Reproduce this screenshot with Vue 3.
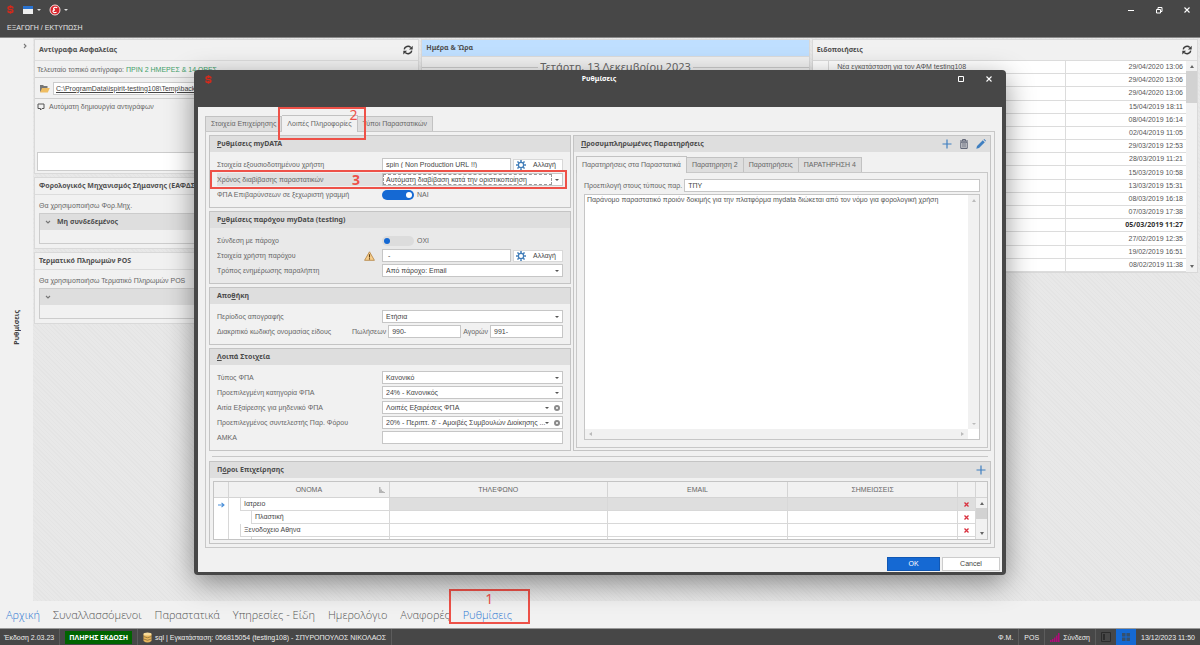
<script setup>
import { ref } from 'vue'

const notices = [
  '29/04/2020 13:06', '29/04/2020 13:06', '29/04/2020 13:06', '15/04/2019 18:11',
  '08/04/2019 16:14', '02/04/2019 11:05', '29/03/2019 12:53', '28/03/2019 11:21',
  '15/03/2019 10:58', '13/03/2019 15:31', '08/03/2019 16:18', '07/03/2019 17:38',
  '05/03/2019 11:27', '27/02/2019 12:35', '19/02/2019 16:51', '08/02/2019 11:38'
]
const unread = 12
const nav = ['Αρχική', 'Συναλλασσόμενοι', 'Παραστατικά', 'Υπηρεσίες - Είδη', 'Ημερολόγιο', 'Αναφορές', 'Ρυθμίσεις']
const tabs = ['Στοιχεία Επιχείρησης', 'Λοιπές Πληροφορίες', 'Τύποι Παραστατικών']
const noteTabs = ['Παρατηρήσεις στα Παραστατικά', 'Παρατηρηση 2', 'Παρατηρήσεις', 'ΠΑΡΑΤΗΡΗΣΗ 4']
const resources = [
  { name: 'Ιατρειο', level: 1 },
  { name: 'Πλαστική', level: 2 },
  { name: 'Ξενοδοχειο Αθηνα', level: 1 }
]
const vatSeparate = ref(true)
const provider = ref(false)
const note = ref('Παράνομο παραστατικό προιόν δοκιμής για την πλατφόρμα mydata διώκεται από τον νόμο για φορολογική χρήση')
</script>

<template>
  <div class="app">
    <svg class="defs" aria-hidden="true">
      <symbol id="logo" viewBox="0 0 10 12">
        <path d="M8.400 4.400V3.600Q8.400 2 6.800 2H3.200Q1.600 2 1.600 3.600V4.200Q1.600 5.200 3 5.600L7 6.400Q8.400 6.800 8.400 7.800V8.400Q8.400 10 6.800 10H3.200Q1.600 10 1.600 8.400V7.600M5 0V4M5 8V12" fill="none" stroke="#d42a1c" stroke-width="2.200" />
      </symbol>
      <symbol id="refresh" viewBox="0 0 16 16">
        <path d="M2 7A6 5.6 0 0 1 12.4 4M14 9A6 5.6 0 0 1 3.6 12" fill="none" stroke="#3c3c3c" stroke-width="2.4" />
        <path d="M15.5 1V7H9.5ZM.5 15V9H6.5Z" fill="#3c3c3c" />
      </symbol>
      <symbol id="gear" viewBox="0 0 16 16">
        <g stroke="#3f7cb8" fill="none">
          <circle cx="8" cy="8" r="4.2" stroke-width="2" />
          <path d="M8 0V3M8 13V16M0 8H3M13 8H16M2.3 2.3L4.5 4.5M11.5 11.5L13.7 13.7M13.7 2.3L11.5 4.5M4.5 11.5L2.3 13.7" stroke-width="2.4" />
        </g>
      </symbol>
      <symbol id="plus" viewBox="0 0 10 10"><path d="M5 .5V9.5M.5 5H9.5" stroke="#3f7fc0" stroke-width="1.2" /></symbol>
      <symbol id="close" viewBox="0 0 8 8"><path d="M1.5 1.5L6.5 6.5M6.5 1.5L1.5 6.5" stroke="#fff" stroke-width="1.1" /></symbol>
      <symbol id="chev" viewBox="0 0 8 8"><path d="M2 3L4 5L6 3" fill="none" stroke="#777" stroke-width="1.1" /></symbol>
    </svg>

    <header class="top">
      <div class="bar">
        <svg class="logo"><use href="#logo" /></svg>
        <button class="quick" aria-label="Παράθυρο">
          <svg width="12" height="10" viewBox="0 0 12 10"><path d="M1 1H11V9H1Z" fill="#eee" /><path d="M1 1H11V4H1Z" fill="#2a73d0" /></svg>
          <i class="tri light"></i>
        </button>
        <button class="quick" aria-label="Ενέργειες">
          <svg width="12" height="12" viewBox="0 0 12 12"><circle cx="6" cy="6" r="5" fill="#d8232a" stroke="#f4dcdc" /><path d="M8.2 3.6Q5.2 2.6 4.6 4.6Q4.4 5.8 6 5.9Q3.8 6.2 4 7.6Q4.6 9.2 7.6 8.2" fill="none" stroke="#fff" stroke-width="1.2" /></svg>
          <i class="tri light"></i>
        </button>
        <span class="grow"></span>
        <div class="winbtns">
          <button aria-label="Ελαχιστοποίηση"><svg viewBox="0 0 8 8"><path d="M1 4.5H7" stroke="#fff" /></svg></button>
          <button aria-label="Επαναφορά"><svg viewBox="0 0 8 8"><path d="M1.5 3.5H5.5V7H1.5ZM3 3V1.5H7V5.5H6" fill="none" stroke="#fff" /></svg></button>
          <button aria-label="Κλείσιμο"><svg><use href="#close" /></svg></button>
        </div>
      </div>
      <a href="#" class="export">ΕΞΑΓΩΓΗ / ΕΚΤΥΠΩΣΗ</a>
    </header>

    <main class="desk">
      <aside class="strip">
        <svg class="exp" viewBox="0 0 8 8"><path d="M3 2L5 4L3 6" fill="none" stroke="#777" stroke-width="1.1" /></svg>
        <span class="vert">Ρυθμίσεις</span>
      </aside>
      <div class="cols">
        <div class="col">
          <section class="panel backup">
            <h2 class="tall">Αντίγραφα Ασφαλείας <button class="ref" aria-label="Ανανέωση"><svg><use href="#refresh" /></svg></button></h2>
            <p class="last">Τελευταίο τοπικό αντίγραφο: <span class="green">ΠΡΙΝ 2 ΗΜΕΡΕΣ &amp; 14 ΩΡΕΣ</span></p>
            <div class="path">
              <svg width="11" height="9" viewBox="0 0 11 9"><path d="M1 8V1H4L5 2H8.500V4" fill="#777" /><path d="M1 8.500L3 4H10.800L8.800 8.500Z" fill="#efbd62" /></svg>
              <a href="#">C:\ProgramData\ispirit-testing108\Temp\backup</a>
            </div>
            <p class="auto"><svg width="8" height="8" viewBox="0 0 8 8"><path d="M1 1H7V5.500H5L3.500 7V5.500H1Z" fill="none" stroke="#555" /></svg>Αυτόματη δημιουργία αντιγράφων</p>
            <button class="create">Δημιουργία</button>
          </section>
          <section class="panel">
            <h2>Φορολογικός Μηχανισμός Σήμανσης (ΕΑΦΔΣΣ)</h2>
            <p class="use">Θα χρησιμοποιήσω Φορ.Μηχ.</p>
            <div class="sub"><h3><svg><use href="#chev" /></svg>Μη συνδεδεμένος</h3></div>
          </section>
          <section class="panel">
            <h2>Τερματικό Πληρωμών POS</h2>
            <p class="use">Θα χρησιμοποιήσω Τερματικό Πληρωμών POS</p>
            <div class="sub"><h3><svg><use href="#chev" /></svg></h3></div>
          </section>
        </div>
        <div class="col">
          <section class="panel">
            <h2 class="blue">Ημέρα &amp; Ώρα</h2>
            <p class="date"><span>Τετάρτη, 13 Δεκεμβρίου 2023</span></p>
          </section>
        </div>
        <div class="col">
          <section class="panel news">
            <h2 class="tall">Ειδοποιήσεις <button class="ref" aria-label="Ανανέωση"><svg><use href="#refresh" /></svg></button></h2>
            <div class="newsbody">
              <table>
                <tbody>
                  <tr v-for="(n, i) in notices" :key="i" :class="{ bold: i === unread }">
                    <td class="mark"></td>
                    <td class="msg">{{ i === 0 ? 'Νέα εγκατάσταση για τον ΑΦΜ testing108' : '' }}</td>
                    <td class="when">{{ n }}</td>
                  </tr>
                </tbody>
              </table>
              <div class="scroll"><i class="tri up"></i><b></b><i class="tri end"></i></div>
            </div>
          </section>
        </div>
      </div>
    </main>

    <nav class="nav">
      <a v-for="(n, i) in nav" :key="n" href="#" :class="{ on: i === 0 || i === 6 }">{{ n }}<span v-if="i === 6" class="mark1">1</span></a>
    </nav>

    <footer class="status">
      <span class="cell first">Έκδοση 2.03.23</span>
      <span class="cell"><b class="full">ΠΛΗΡΗΣ ΕΚΔΟΣΗ</b></span>
      <span class="cell db">
        <svg width="9" height="11" viewBox="0 0 9 11"><path d="M.5 2V9Q4.500 12 8.500 9V2Z" fill="#e8b65c" /><ellipse cx="4.500" cy="2" rx="4" ry="1.500" fill="#f8dc9c" /><path d="M.5 4.500Q4.500 7 8.500 4.500M.5 7Q4.500 9.500 8.500 7" fill="none" stroke="#7d6434" stroke-width=".7" /></svg>
        sql | Εγκατάσταση: 056815054 (testing108) - ΣΠΥΡΟΠΟΥΛΟΣ ΝΙΚΟΛΑΟΣ
      </span>
      <span class="grow"></span>
      <span class="cell">Φ.Μ.</span>
      <span class="cell">POS</span>
      <span class="cell conn">
        <svg width="10" height="9" viewBox="0 0 10 9"><path d="M0 9V7H1.500V9ZM2 9V6H3.500V9ZM4 9V4.500H5.500V9ZM6 9V2.500H7.500V9ZM8 9V0H9.500V9Z" fill="#b3087a" /></svg>
        Σύνδεση
      </span>
      <button class="view" aria-label="Πλευρική προβολή"><svg width="10" height="10" viewBox="0 0 10 10"><path d="M.5 .5H9.500V9.500H.5Z" fill="none" stroke="#2c2c2c" /><path d="M2 2H4V8H2Z" fill="#2c2c2c" /></svg></button>
      <button class="view active" aria-label="Προβολή πλακιδίων"><svg width="10" height="10" viewBox="0 0 10 10"><path d="M1 1H4.500V4.500H1ZM5.500 1H9V4.500H5.500ZM1 5.500H4.500V9H1ZM5.500 5.500H9V9H5.500Z" fill="#35506e" /></svg></button>
      <span class="cell time">13/12/2023 11:50</span>
    </footer>

    <div class="dialog" role="dialog" aria-label="Ρυθμίσεις">
      <div class="dtitle">
        <svg class="logo"><use href="#logo" /></svg>
        <strong>Ρυθμίσεις</strong>
        <div class="winbtns">
          <button aria-label="Μεγιστοποίηση"><svg viewBox="0 0 8 8"><path d="M1.500 1.500H6.500V6.500H1.500Z" fill="none" stroke="#fff" /></svg></button>
          <button aria-label="Κλείσιμο"><svg><use href="#close" /></svg></button>
        </div>
      </div>
      <div class="dbody">
        <div class="tabs">
          <button v-for="(t, i) in tabs" :key="t" :class="{ on: i === 1 }">{{ t }}<span v-if="i === 1" class="mark2">2</span></button>
        </div>
        <div class="page">
          <div class="split">
            <div class="stack">
              <section class="group">
                <h4><u>Ρ</u>υθμίσεις myDATA</h4>
                <div class="rows">
                  <div class="row">
                    <label for="user">Στοιχεία εξουσιοδοτημένου χρήστη</label>
                    <div class="ctl"><input id="user" type="text" value="spin ( Non Production URL !!)"><button class="change"><svg><use href="#gear" /></svg>Αλλαγή</button></div>
                  </div>
                  <div class="row hot">
                    <label for="sendtime">Χρόνος διαβίβασης παραστατικών</label>
                    <div class="ctl sel focus"><select id="sendtime"><option>Αυτόματη διαβίβαση κατά την οριστικοποίηση</option></select><i class="tri"></i></div>
                    <span class="mark3">3</span>
                  </div>
                  <div class="row">
                    <label for="vatsep">ΦΠΑ Επιβαρύνσεων σε ξεχωριστή γραμμή</label>
                    <div class="ctl"><input id="vatsep" v-model="vatSeparate" type="checkbox" class="toggle"><span class="state">{{ vatSeparate ? 'ΝΑΙ' : 'ΟΧΙ' }}</span></div>
                  </div>
                </div>
              </section>
              <section class="group dim">
                <h4>Ρ<u>υ</u>θμίσεις παρόχου myData (testing)</h4>
                <div class="rows">
                  <div class="row">
                    <label for="prov">Σύνδεση με πάροχο</label>
                    <div class="ctl"><input id="prov" v-model="provider" type="checkbox" class="toggle"><span class="state">{{ provider ? 'ΝΑΙ' : 'ΟΧΙ' }}</span></div>
                  </div>
                  <div class="row">
                    <label for="provuser" class="warned">Στοιχεία χρήστη παρόχου
                      <svg width="11" height="10" viewBox="0 0 11 10"><path d="M5.500 .8L10.400 9.300H.6Z" fill="#f8cf8c" stroke="#b98a4c" stroke-width=".9" stroke-linejoin="round" /><path d="M5.500 3.200V6.500M5.500 7.200V8.400" stroke="#5b3c14" stroke-width="1.100" /></svg>
                    </label>
                    <div class="ctl"><input id="provuser" type="text" value=" -"><button class="change"><svg><use href="#gear" /></svg>Αλλαγή</button></div>
                  </div>
                  <div class="row">
                    <label for="notify">Τρόπος ενημέρωσης παραλήπτη</label>
                    <div class="ctl sel"><select id="notify"><option>Από πάροχο: Email</option></select><i class="tri"></i></div>
                  </div>
                </div>
              </section>
              <section class="group">
                <h4>Απο<u>θ</u>ήκη</h4>
                <div class="rows">
                  <div class="row">
                    <label for="period">Περίοδος απογραφής</label>
                    <div class="ctl sel"><select id="period"><option>Ετήσια</option></select><i class="tri"></i></div>
                  </div>
                  <div class="row codes">
                    <span class="cap">Διακριτικό κωδικής ονομασίας είδους</span>
                    <label for="sales">Πωλήσεων</label><input id="sales" type="text" value="990-">
                    <label for="buys">Αγορών</label><input id="buys" type="text" value="991-">
                  </div>
                </div>
              </section>
              <section class="group">
                <h4><u>Λ</u>οιπά Στοιχεία</h4>
                <div class="rows">
                  <div class="row">
                    <label for="vattype">Τύπος ΦΠΑ</label>
                    <div class="ctl sel"><select id="vattype"><option>Κανονικό</option></select><i class="tri"></i></div>
                  </div>
                  <div class="row">
                    <label for="vatcat">Προεπιλεγμένη κατηγορία ΦΠΑ</label>
                    <div class="ctl sel"><select id="vatcat"><option>24% - Κανονικός</option></select><i class="tri"></i></div>
                  </div>
                  <div class="row">
                    <label for="exempt">Αιτία Εξαίρεσης για μηδενικό ΦΠΑ</label>
                    <div class="ctl sel clr"><select id="exempt"><option>Λοιπές Εξαιρέσεις ΦΠΑ</option></select><i class="tri"></i><button class="x" aria-label="Καθαρισμός"></button></div>
                  </div>
                  <div class="row">
                    <label for="factor">Προεπιλεγμένος συντελεστής Παρ. Φόρου</label>
                    <div class="ctl sel clr"><select id="factor"><option>20% - Περιπτ. δ' - Αμοιβές Συμβουλών Διοίκησης ...</option></select><i class="tri"></i><button class="x" aria-label="Καθαρισμός"></button></div>
                  </div>
                  <div class="row">
                    <label for="amka">ΑΜΚΑ</label>
                    <div class="ctl"><input id="amka" type="text"></div>
                  </div>
                </div>
              </section>
            </div>

            <section class="group notes">
              <h4><u>Π</u>ροσυμπληρωμένες Παρατηρήσεις
                <span class="tools">
                  <button aria-label="Προσθήκη"><svg><use href="#plus" /></svg></button>
                  <button aria-label="Διαγραφή"><svg viewBox="0 0 10 10"><path d="M1 2H9M3.500 1.800V.6H6.500V1.800M1.800 3.200H8.200V9.400H1.800ZM4 4V8.500M6 4V8.500" fill="none" stroke="#555b6e" /></svg></button>
                  <button aria-label="Επεξεργασία"><svg viewBox="0 0 10 10"><path d="M.3 9.700L1 7L6.800 1.200L8.800 3.200L3 9ZM7.500 .6L8.300 0L10 1.700L9.400 2.500Z" fill="#3f7fc0" /></svg></button>
                </span>
              </h4>
              <div class="notebody">
                <div class="tabs small">
                  <button v-for="(t, i) in noteTabs" :key="t" :class="{ on: i === 0 }">{{ t }}</button>
                </div>
                <div class="notepage">
                  <div class="types"><label for="types">Προεπιλογή στους τύπους παρ.</label><input id="types" type="text" value="ΤΠΥ"></div>
                  <div class="memo">
                    <textarea v-model="note" aria-label="Κείμενο παρατήρησης"></textarea>
                    <div class="vbar"><i class="tri up"></i><i class="tri"></i></div>
                    <div class="hbar"><i class="tri lt"></i><i class="tri rt"></i></div>
                  </div>
                </div>
              </div>
            </section>
          </div>

          <hr>

          <section class="group res">
            <h4>Π<u>ό</u>ροι Επιχείρησης
              <span class="tools"><button aria-label="Προσθήκη πόρου"><svg><use href="#plus" /></svg></button></span>
            </h4>
            <div class="gridbox">
              <table>
                <thead>
                  <tr>
                    <th class="c0"></th>
                    <th class="c1">ΟΝΟΜΑ<svg class="sort" viewBox="0 0 6 6"><path d="M0 0V6H6V5H4.500V4H3V2.500H1.500V0Z" fill="#b5b5b5" /></svg></th>
                    <th class="c2">ΤΗΛΕΦΩΝΟ</th>
                    <th class="c3">EMAIL</th>
                    <th>ΣΗΜΕΙΩΣΕΙΣ</th>
                    <th class="c5"></th>
                  </tr>
                </thead>
                <tbody>
                  <tr v-for="(r, i) in resources" :key="r.name" :class="{ cur: i === 0 }">
                    <td class="ind"><svg v-if="i === 0" width="7" height="6" viewBox="0 0 7 6"><path d="M0 3H6M3.500 .8L6 3L3.500 5.200" fill="none" stroke="#4a90d9" stroke-width="1.100" /></svg></td>
                    <td class="name"><div :class="'lv' + r.level">{{ r.name }}</div></td>
                    <td></td><td></td><td></td>
                    <td class="del"><button :aria-label="'Διαγραφή ' + r.name"><svg width="5" height="5" viewBox="0 0 5 5"><path d="M.5 .5L4.500 4.500M4.500 .5L.5 4.500" stroke="#d9303e" stroke-width="1.300" /></svg></button></td>
                  </tr>
                  <tr class="part"><td class="ind"></td><td class="name"><div class="lv2"></div></td><td></td><td></td><td></td><td></td></tr>
                </tbody>
              </table>
              <div class="gscroll"><span></span><div class="scroll short"><i class="tri up"></i><b></b><i class="tri end"></i></div></div>
            </div>
          </section>
        </div>
        <div class="actions">
          <button class="ok">OK</button>
          <button class="cancel">Cancel</button>
        </div>
      </div>
    </div>
  </div>
</template>

<style>
body { margin: 0; background: #f1f1f1; }
</style>

<style scoped>
* { box-sizing: border-box; }
.app {
  position: relative; display: flex; flex-direction: column; min-height: 100vh; overflow: hidden;
  font: 7px/12px "Liberation Sans", Arial, sans-serif; color: #666; background: #f1f1f1;
}
.defs { position: absolute; width: 0; height: 0; }
button, input, select, textarea { font: inherit; color: inherit; margin: 0; padding: 0; border: 0; border-radius: 0; background: none; }
h2, h3, h4, p { margin: 0; font-size: 7px; }
h2, h3, h4, b, strong, .bold, .vert { font-family: "Noto Sans", sans-serif; }
svg { flex: none; display: block; }
a { color: inherit; text-decoration: none; }
.grow { flex: 1; }
.tri { width: 0; height: 0; border: 2px solid transparent; border-top-color: #555; border-bottom-width: 0; flex: none; }
.tri.light { border-top-color: #ddd; }
.tri.up { border-width: 0 2px 3px; border-bottom-color: #666; }
.tri.end { border-width: 3px 2px 0; border-top-color: #666; }
.logo { width: 7px; height: 9px; }

.top { height: 38px; background: #474747; border-bottom: 1px solid #8a8a8a; color: #e6e6e6; }
.bar { display: flex; align-items: center; height: 19px; padding: 0 9px 0 7px; }
.quick { display: flex; align-items: center; gap: 3px; margin-left: 8px; }
.export { display: block; padding: 3px 7px; }
.winbtns { display: flex; gap: 20px; }
.winbtns button { width: 8px; height: 8px; }
.winbtns svg { width: 8px; height: 8px; }

.desk { flex: 1; display: flex; min-height: 562px; }
.strip { width: 33px; display: flex; flex-direction: column; align-items: center; position: relative; }
.exp { width: 8px; height: 8px; margin: 4px 0 0 16px; }
.vert { writing-mode: vertical-rl; transform: rotate(180deg); font-weight: 700; color: #444; margin-top: 260px; }
.cols {
  flex: 1; display: grid; grid-template-columns: 387fr 390fr 388fr; gap: 2px; padding: 1px 2px 0 1px;
  background: repeating-linear-gradient(45deg, #e4e4e4 0 1px, #e8e8e8 1px 3px);
}
.col { display: flex; flex-direction: column; gap: 3px; min-width: 0; }
.panel { background: #f1f1f1; border: 1px solid #d9d9d9; color: #666; }
.panel h2 { height: 17px; line-height: 16px; padding: 0 5px 0 4px; color: #505050; border-bottom: 1px solid #dcdcdc; display: flex; justify-content: space-between; align-items: center; white-space: nowrap; }
.panel h2.tall { height: 21px; }
.panel h2.blue { background: #bfdfff; }
.ref svg { width: 10px; height: 10px; }
.last { height: 17px; line-height: 18px; padding-left: 2px; border-bottom: 1px solid #cfcfcf; }
.green { color: #3f9e68; }
.path { display: flex; align-items: center; gap: 3px; height: 21px; padding: 0 4px; border-bottom: 1px solid #cfcfcf; }
.path a { flex: 1; background: #fff; border: 1px solid #ccc; height: 13px; line-height: 11px; padding-left: 2px; text-decoration: underline; color: #444; }
.auto { display: flex; align-items: center; gap: 4px; padding: 2px; height: 16px; }
.create { display: block; width: calc(100% - 4px); height: 19px; margin: 37px 2px 2px; background: #fff; border: 1px solid #ccc; }
.use { height: 18px; line-height: 22px; padding-left: 4px; }
.sub { margin: 0 4px 4px; border: 1px solid #ccc; height: 31px; }
.sub h3 { display: flex; align-items: center; gap: 5px; height: 16px; padding-left: 4px; background: #dedede; color: #505050; }
.sub svg { width: 8px; height: 8px; }
.date { font: 11px/20px "Noto Sans", sans-serif; height: 300px; display: flex; align-items: flex-start; gap: 2px; }
.date::before, .date::after { content: ""; flex: 1; border-top: 1px solid #ccc; margin-top: 10px; }

.newsbody { display: flex; background: #fff; }
.newsbody table { flex: 1; height: 211px; border-collapse: collapse; color: #555; }
.newsbody td { padding: 0 3px; line-height: 12px; border-bottom: 1px solid #dcdcdc; border-right: 1px solid #dcdcdc; }
.newsbody .mark { width: 16px; }
.newsbody .msg { padding-left: 8px; }
.newsbody .when { width: 121px; text-align: right; border-right: 0; }
.newsbody .bold { font-weight: 700; color: #333; }
.scroll { width: 11px; background: #f1f1f1; display: flex; flex-direction: column; align-items: center; padding: 4px 0; }
.scroll b { width: 11px; height: 32px; background: #d2d2d2; margin-top: 3px; }
.scroll .end { margin-top: auto; }

.nav { display: flex; align-items: center; gap: 13px; height: 27px; padding-left: 6px; font: 300 11px/18px "Open Sans", "Noto Sans", sans-serif; color: #555; }
.nav .on { color: #2f78d2; }
.nav a { position: relative; white-space: nowrap; }
.mark1 { position: absolute; inset: -17px -18px 0 -14px; border: 2px solid #ee5148; color: #ee5148; text-align: center; font: 14px/16px "Noto Sans", sans-serif; }

.status { display: flex; align-items: stretch; height: 17px; background: #474747; border-top: 1px solid #999; color: #eee; line-height: 15px; }
.cell { display: flex; align-items: center; gap: 3px; padding: 0 5px; border-right: 1px solid #5c5c5c; white-space: nowrap; }
.cell.first { padding-left: 4px; }
.full { background: #006400; color: #fff; padding: 0 4px; line-height: 13px; }
.view { width: 20px; display: flex; align-items: center; justify-content: center; }
.view.active { background: #1569d3; }
.time { border-right: 0; }

.dialog { position: absolute; top: 70px; left: 194px; right: 194px; background: #474747; padding: 0 4px 3px; border-radius: 4px; box-shadow: 0 8px 28px rgba(0, 0, 0, .42); }
.dtitle { display: grid; grid-template-columns: 1fr auto 1fr; align-items: center; height: 37px; padding: 0 9px 19px 7px; color: #fff; }
.dtitle .winbtns { justify-content: flex-end; }
.dbody { background: #f1f1f1; padding: 8px 2px 1px 7px; }
.tabs { display: flex; align-items: flex-end; height: 16px; }
.tabs button { position: relative; height: 15px; padding: 0 5px; background: #dedede; border: 1px solid #c2c2c2; border-width: 1px 1px 0 0; white-space: nowrap; }
.tabs button:first-child { border-left-width: 1px; }
.tabs button.on { height: 17px; margin-bottom: -1px; background: #f1f1f1; z-index: 1; }
.mark2 { position: absolute; inset: -9px -9px -8px -4px; border: 2px solid #ee5148; color: #ee5148; font: 14px/12px "Noto Sans", sans-serif; text-align: right; padding-right: 6px; z-index: 2; }
.page { border: 1px solid #c8c8c8; margin-right: 5px; padding: 3px; }
.split { display: grid; grid-template-columns: 362fr 418fr; gap: 2px; }
.stack { display: flex; flex-direction: column; gap: 3px; min-width: 0; }
.group { border: 1px solid #c4c4c4; min-width: 0; }
.group h4 { display: flex; align-items: center; height: 16px; padding: 0 4px 0 7px; background: #dedede; color: #4c4c4c; white-space: pre; }
.group.dim { background: #e9e9e9; }
.rows { display: flex; flex-direction: column; gap: 2px; padding: 6px 7px; }
.row { position: relative; display: grid; grid-template-columns: 165fr 181fr; align-items: center; height: 13px; white-space: nowrap; }
.row.hot { background: #e0e0e0; }
.warned { display: flex; justify-content: space-between; align-items: center; padding-right: 7px; }
.ctl { position: relative; display: flex; align-items: center; min-width: 0; height: 13px; }
input[type="text"] { flex: 1; min-width: 0; width: 100%; height: 13px; background: #fff; border: 1px solid #c6c6c6; padding: 0 3px; color: #444; }
.change { display: flex; align-items: center; gap: 7px; width: 50px; height: 12px; margin-left: 2px; padding-left: 2px; background: #fff; border: 1px solid #d8d8d8; color: #444; }
.change svg { width: 10px; height: 10px; }
.sel select { appearance: none; width: 100%; height: 13px; background: #fff; border: 1px solid #c6c6c6; padding: 0 12px 0 3px; color: #444; }
.sel .tri { position: absolute; right: 4px; top: 6px; }
.clr .tri { right: 14px; }
.focus::before { content: ""; position: absolute; inset: 1px 11px 1px 1px; border: 1px dashed #999; pointer-events: none; }
.x { position: absolute; right: 3px; top: 4px; width: 6px; height: 6px; border: 2px solid #8a8a8a; border-radius: 50%; }
.mark3 { position: absolute; inset: -3px -4px -3px -7px; border: 2px solid #ee5148; color: #ee5148; font: 700 14px/15px "Noto Sans", sans-serif; padding-left: 140px; pointer-events: none; }
.toggle { appearance: none; width: 32px; height: 10px; border-radius: 5px; background: #dcdcdc; display: flex; align-items: center; padding: 0 2px; }
.toggle::before { content: ""; width: 6px; height: 6px; border-radius: 50%; background: #1569d3; }
.toggle:checked { background: #1569d3; justify-content: flex-end; }
.toggle:checked::before { background: #fff; }
.state { margin-left: 3px; }
.row.codes { display: flex; gap: 2px; }
.codes .cap { width: 133px; }
.codes label { flex: none; }

.notes { display: flex; flex-direction: column; }
.tools { margin-left: auto; display: flex; gap: 7px; }
.tools svg { width: 10px; height: 10px; }
.notebody { flex: 1; display: flex; flex-direction: column; padding: 4px 2px 2px; }
.notepage { flex: 1; display: flex; flex-direction: column; gap: 2px; border: 1px solid #c8c8c8; padding: 6px 7px 7px; }
.types { display: flex; align-items: center; gap: 2px; white-space: nowrap; }
.memo { flex: 1; display: grid; grid-template: 1fr 10px / 1fr 11px; background: #fff; border: 1px solid #c6c6c6; }
.memo textarea { resize: none; padding: 0 2px; line-height: 10px; color: #555; overflow: hidden; outline: 0; }
.vbar, .hbar { background: #f1f1f1; display: flex; align-items: center; justify-content: space-between; padding: 4px; }
.vbar { flex-direction: column; }
.memo .tri { border-top-color: #bbb; }
.memo .tri.up { border-top-color: transparent; border-bottom-color: #bbb; }
.memo .lt { border-width: 2px 3px 2px 0; border-color: transparent #bbb; }
.memo .rt { border-width: 2px 0 2px 3px; border-color: transparent #bbb; }

hr { border: 0; border-top: 1px solid #c8c8c8; margin: 5px 3px 4px; }
.gridbox { display: flex; height: 59px; margin: 3px 2px 3px 3px; border: 1px solid #c4c4c4; overflow: hidden; background: #fff; }
.gridbox table { flex: 1; border-collapse: separate; border-spacing: 0; table-layout: fixed; height: 61px; color: #444; }
.gridbox th { height: 16px; padding: 0; background: #f1f1f1; font-weight: 400; color: #666; border-right: 1px solid #d4d4d4; border-bottom: 1px solid #d4d4d4; position: relative; }
.gridbox td { height: 13px; padding: 0; border-right: 1px solid #d8d8d8; border-bottom: 1px solid #d8d8d8; line-height: 12px; }
.c0 { width: 15px; }
.c1 { width: 21.1%; }
.c2 { width: 28.6%; }
.c3 { width: 23.7%; }
.c5 { width: 18px; }
.sort { position: absolute; right: 4px; top: 5px; width: 6px; height: 6px; }
.gridbox .ind, .gridbox .name { border-bottom: 0; }
.ind svg, .del svg { margin: 0 auto; }
.name div { height: 13px; border-left: 1px solid #d8d8d8; border-bottom: 1px solid #d8d8d8; padding-left: 3px; }
.name .lv1 { margin-left: 11px; }
.name .lv2 { margin-left: 22px; }
.cur td:nth-child(n+3) { background: #dedede; }
.del button { display: block; margin: 0 auto; }
.gscroll { width: 11px; display: flex; flex-direction: column; }
.gscroll span { height: 16px; background: #f1f1f1; border-bottom: 1px solid #d4d4d4; }
.scroll.short { flex: 1; }
.short b { height: 11px; }

.actions { display: flex; justify-content: flex-end; gap: 2px; margin-top: 9px; }
.actions button { height: 14px; border: 1px solid #ccc; background: #fff; color: #444; width: 58px; }
.actions .ok { width: 53px; background: #1569d3; border-color: #1158b4; color: #fff; }
</style>
